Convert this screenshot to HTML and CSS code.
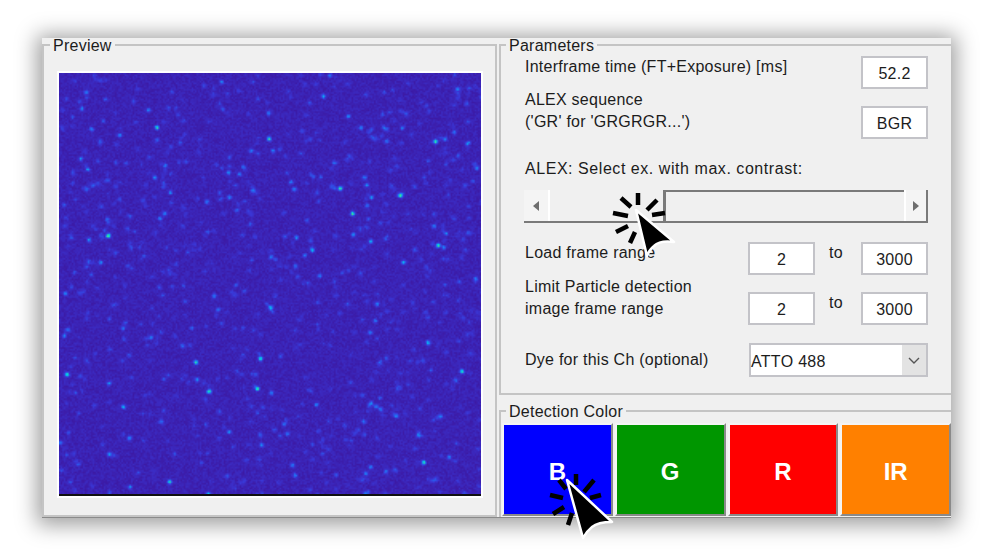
FILE: index.html
```html
<!DOCTYPE html>
<html lang="en">
<head>
  <meta charset="UTF-8" />
  <title>Detection settings</title>
  <link rel="stylesheet" href="styles.css">
</head>
<body>
  <div class="window">
    <fieldset class="group preview-group">
      <legend>Preview</legend>
      <canvas id="preview" class="preview" width="264" height="264"></canvas>
    </fieldset>

    <div class="right-col">
      <fieldset class="group params">
        <legend>Parameters</legend>
        <div class="params-body">
          <div class="row row-interframe">
            <span class="label">Interframe time (FT+Exposure) [ms]</span>
            <div class="field">52.2</div>
          </div>

          <div class="row row-alex">
            <span class="label">ALEX sequence<br>('GR' for 'GRGRGR...')</span>
            <div class="field">BGR</div>
          </div>

          <div class="label slider-label">ALEX: Select ex. with max. contrast:</div>
          <div class="scrollbar">
            <div class="scroll-btn"><span class="arrow-left"></span></div>
            <div class="scroll-thumb"></div>
            <div class="scroll-track"></div>
            <div class="scroll-btn"><span class="arrow-right"></span></div>
          </div>

          <div class="row row-load">
            <span class="label">Load frame range</span>
            <div class="range">
              <div class="field">2</div>
              <span class="to">to</span>
              <div class="field">3000</div>
            </div>
          </div>

          <div class="row row-limit">
            <span class="label">Limit Particle detection<br>image frame range</span>
            <div class="range">
              <div class="field">2</div>
              <span class="to">to</span>
              <div class="field">3000</div>
            </div>
          </div>

          <div class="row row-dye">
            <span class="label">Dye for this Ch (optional)</span>
            <div class="select">
              <span class="select-text">ATTO 488</span>
              <span class="select-btn">
                <svg width="12" height="7" viewBox="0 0 12 7"><path d="M1 1l5 5 5-5" fill="none" stroke="#555" stroke-width="1.4"/></svg>
              </span>
            </div>
          </div>
        </div>
      </fieldset>

      <fieldset class="group detection">
        <legend>Detection Color</legend>
        <div class="color-buttons">
          <button class="color-btn blue">B</button>
          <button class="color-btn green">G</button>
          <button class="color-btn red">R</button>
          <button class="color-btn orange">IR</button>
        </div>
      </fieldset>
    </div>
  </div>

  <!-- click markers -->
  <svg class="cursor cursor-slider" width="70" height="80" viewBox="0 0 70 80">
    <path d="M26 3v12M9 8l10 9M45 10L35 20M53 23l-13 2M1 23l15 3M4 42l12-6M18 53l5-11" stroke="#000" stroke-width="4.5" fill="none"/>
    <path d="M24 20L62 52Q48 50 42 56Q37 60 35 66Z" fill="#000" stroke="#fff" stroke-width="2.5" stroke-linejoin="round"/>
  </svg>
  <svg class="cursor cursor-blue" width="70" height="80" viewBox="0 0 70 80">
    <path d="M30 4v11M13 10l7 9M48 10L38 22M55 25l-11 3M4 25l13 3M7 44l11-7M22 55l4-12" stroke="#000" stroke-width="4.5" fill="none"/>
    <path d="M21 10L66 52Q52 52 46 57Q40 62 37 68Z" fill="#000" stroke="#fff" stroke-width="2.5" stroke-linejoin="round"/>
  </svg>

  <script src="script.js"></script>
</body>
</html>
```

FILE: styles.css
```css
* {
  box-sizing: border-box;
}

body {
  margin: 0;
  background: #fff;
  font-family: "Liberation Sans", Arial, sans-serif;
  font-size: 16px;
  letter-spacing: 0.25px;
  color: #1c1c1c;
  position: relative;
  height: 558px;
  overflow: hidden;
}

.window {
  width: 909px;
  height: 480px;
  margin: 38px 0 0 42px;
  float: left;
  display: flex;
  gap: 2px;
  background: #f0f0f0;
  border-bottom: 1px solid #8a8a8a;
  box-shadow: 0 2px 20px 5px rgba(0,0,0,0.38);
}

.group {
  margin: 0;
  padding: 0;
  min-width: 0;
  border: 2px solid #c4c4c4;
  border-radius: 0;
}

.group legend {
  margin-left: 6px;
  padding: 0 3px;
  height: 14px;
  line-height: 16px;
}

.preview-group {
  width: 455px;
  height: 479px;
}

.preview {
  display: block;
  width: 422px;
  height: 423px;
  margin: 21px 0 0 15px;
  border-bottom: 2px solid #111;
  box-shadow: 0 0 0 2px #fff;
}

.right-col {
  flex: 1;
  display: flex;
  flex-direction: column;
}

.right-col legend {
  margin-left: 5px;
}

.params {
  height: 358px;
  border-right: none;
}

.params-body {
  padding: 0 23px 0 23px;
}

.row {
  display: flex;
  justify-content: space-between;
  align-items: flex-start;
}

.label {
  line-height: 22px;
  padding-left: 1px;
}

.field {
  width: 67px;
  height: 33px;
  background: #fff;
  border: 2px solid #c3c3c8;
  text-align: center;
  line-height: 31px;
}

.row-interframe {
  margin-top: 4px;
}

.row-alex .field {
  margin-top: 17px;
}

.slider-label {
  margin-top: 19px;
  letter-spacing: 0.55px;
}

.scrollbar {
  display: flex;
  height: 33px;
  margin-top: 10px;
  width: 404px;
  border-bottom: 2px solid #7a7a7a;
}

.scroll-btn {
  width: 26px;
  flex: none;
  display: flex;
  align-items: center;
  justify-content: center;
  background: #f4f4f4;
  border-right: 2px solid #fff;
}

.scroll-btn:last-child {
  width: 24px;
  border-right: 2px solid #7a7a7a;
  border-left: 2px solid #fff;
}

.scroll-thumb {
  width: 116px;
  border-right: 3px solid #7a7a7a;
}

.scroll-track {
  flex: 1;
  border-top: 2px solid #7a7a7a;
}

.arrow-left {
  border: 5px solid transparent;
  border-right: 6px solid #6e6e6e;
  border-left: 0;
}

.arrow-right {
  border: 5px solid transparent;
  border-left: 6px solid #6e6e6e;
  border-right: 0;
}

.range {
  display: flex;
  align-items: flex-start;
}

.to {
  width: 46px;
  padding-right: 4px;
  text-align: center;
  line-height: 20px;
  margin-top: 1px;
}

.row-load {
  margin-top: 19px;
}

.row-limit {
  margin-top: 17px;
}

.row-limit .label {
  margin-top: -16px;
}

.row-dye {
  margin-top: 18px;
}

.row-dye .label {
  margin-top: 6px;
}

.select {
  width: 179px;
  height: 34px;
  display: flex;
  background: #fff;
  border: 2px solid #c3c3c8;
  line-height: 34px;
}

.select-text {
  flex: 1;
  letter-spacing: 0.3px;
}

.select-btn {
  width: 24px;
  background: #e3e3e3;
  display: flex;
  align-items: center;
  justify-content: center;
}

.detection {
  height: 113px;
  margin-top: 9px;
  padding: 5px 0 0 1px;
  border-right: none;
  border-bottom: none;
}

.detection legend {
  margin-left: 4px;
}

.color-buttons {
  display: grid;
  grid-template-columns: repeat(4, 1fr);
  gap: 2px;
}

.color-btn {
  height: 93px;
  padding: 4px 0 0;
  border: 2px solid;
  border-color: #f4f4f4 #8a8a8a #8a8a8a #f4f4f4;
  color: #fff;
  font-family: "Liberation Sans", Arial, sans-serif;
  font-size: 24px;
  font-weight: bold;
}

.blue { background: #0000ff; }
.green { background: #009600; }
.red { background: #ff0000; }
.orange { background: #ff8000; }

.cursor {
  position: absolute;
}

.cursor-slider {
  left: 612px;
  top: 190px;
}

.cursor-blue {
  left: 546px;
  top: 470px;
}
```

FILE: script.js
```js
// fake camera frame: blue-violet noise with blurry spots, drawn small and scaled up
const canvas = document.getElementById("preview");
const ctx = canvas.getContext("2d");
const size = canvas.width;

let seed = 4711;
function rnd() {
  seed = (seed * 16807) % 2147483647;
  return seed / 2147483647;
}

const values = new Float32Array(size * size);

for (let i = 0; i < 850; i++) {
  const cx = rnd() * size;
  const cy = rnd() * size;
  const r = rnd();
  const peak = r > 0.985 ? 0.9 : r > 0.88 ? 0.55 : 0.14 + rnd() * 0.22;
  for (let y = Math.floor(cy) - 4; y <= cy + 4; y++) {
    for (let x = Math.floor(cx) - 4; x <= cx + 4; x++) {
      if (x < 0 || y < 0 || x >= size || y >= size) continue;
      const d = (x - cx) * (x - cx) + (y - cy) * (y - cy);
      values[y * size + x] += peak * Math.exp(-d / 1.9);
    }
  }
}

const stops = [
  [0, 60, 26, 165],
  [0.3, 58, 55, 215],
  [0.55, 35, 110, 245],
  [0.8, 0, 205, 235],
  [1, 70, 235, 130],
];

function colour(v) {
  for (let s = 1; s < stops.length; s++) {
    if (v <= stops[s][0]) {
      const a = stops[s - 1];
      const b = stops[s];
      const t = (v - a[0]) / (b[0] - a[0]);
      return [a[1] + (b[1] - a[1]) * t, a[2] + (b[2] - a[2]) * t, a[3] + (b[3] - a[3]) * t];
    }
  }
  return stops[stops.length - 1].slice(1);
}

const image = ctx.createImageData(size, size);
for (let i = 0; i < values.length; i++) {
  const c = colour(Math.min(1, values[i] + rnd() * 0.18));
  const p = i * 4;
  image.data[p] = c[0];
  image.data[p + 1] = c[1];
  image.data[p + 2] = c[2];
  image.data[p + 3] = 255;
}
ctx.putImageData(image, 0, 0);
```
